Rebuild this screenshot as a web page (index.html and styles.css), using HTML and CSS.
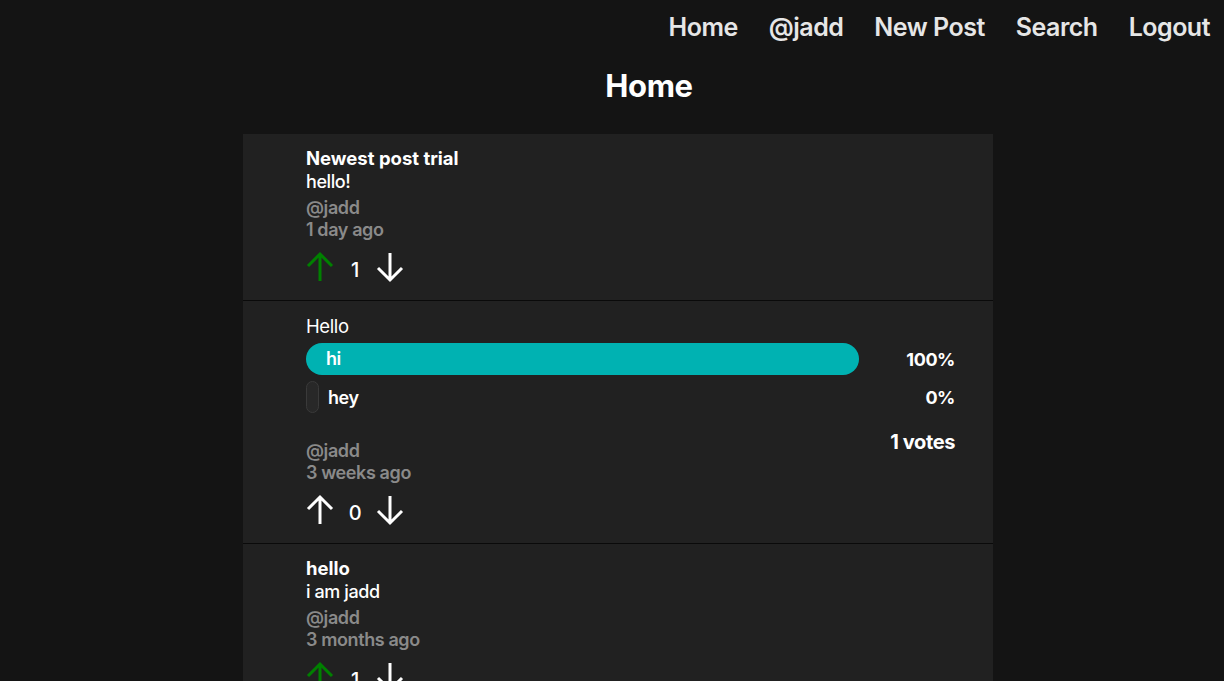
FILE: index.html
```html
<!DOCTYPE html>
<html lang="en">
<head>
<meta charset="utf-8">
<title>Home</title>
<link rel="stylesheet" href="styles.css">
</head>
<body>
<nav class="nav">
  <a class="nav-link" href="#">Home</a>
  <a class="nav-link" href="#">@jadd</a>
  <a class="nav-link" href="#">New Post</a>
  <a class="nav-link" href="#">Search</a>
  <a class="nav-link" href="#">Logout</a>
</nav>
<main class="main">
  <h1 class="page-title">Home</h1>
  <section class="feed">
    <article class="post">
      <div class="post-title">Newest post trial</div>
      <div class="post-body">hello!</div>
      <div class="meta">
        <div class="author">@jadd</div>
        <div class="time">1 day ago</div>
      </div>
      <div class="votes">
        <svg class="arrow up active" viewBox="0 0 28 32" width="28" height="32"><path d="M14 30V3M2 15L14 3L26 15" fill="none" stroke="currentColor" stroke-width="3"/></svg>
        <span class="count">1</span>
        <svg class="arrow down" viewBox="0 0 28 32" width="28" height="32"><path d="M14 2V29M2 17L14 29L26 17" fill="none" stroke="currentColor" stroke-width="3"/></svg>
      </div>
    </article>
    <article class="post">
      <div class="poll-question">Hello</div>
      <div class="poll-row">
        <div class="poll-track">
          <div class="poll-bar filled" style="width:100%">hi</div>
        </div>
        <div class="poll-pct">100%</div>
      </div>
      <div class="poll-row">
        <div class="poll-track">
          <div class="poll-bar empty"></div>
          <span class="poll-label">hey</span>
        </div>
        <div class="poll-pct">0%</div>
      </div>
      <div class="poll-footer">
        <div class="meta poll-meta">
          <div class="author">@jadd</div>
          <div class="time">3 weeks ago</div>
        </div>
        <div class="poll-total">1 votes</div>
      </div>
      <div class="votes">
        <svg class="arrow up" viewBox="0 0 28 32" width="28" height="32"><path d="M14 30V3M2 15L14 3L26 15" fill="none" stroke="currentColor" stroke-width="3"/></svg>
        <span class="count">0</span>
        <svg class="arrow down" viewBox="0 0 28 32" width="28" height="32"><path d="M14 2V29M2 17L14 29L26 17" fill="none" stroke="currentColor" stroke-width="3"/></svg>
      </div>
    </article>
    <article class="post">
      <div class="post-title">hello</div>
      <div class="post-body">i am jadd</div>
      <div class="meta">
        <div class="author">@jadd</div>
        <div class="time">3 months ago</div>
      </div>
      <div class="votes">
        <svg class="arrow up active" viewBox="0 0 28 32" width="28" height="32"><path d="M14 30V3M2 15L14 3L26 15" fill="none" stroke="currentColor" stroke-width="3"/></svg>
        <span class="count">1</span>
        <svg class="arrow down" viewBox="0 0 28 32" width="28" height="32"><path d="M14 2V29M2 17L14 29L26 17" fill="none" stroke="currentColor" stroke-width="3"/></svg>
      </div>
    </article>
  </section>
</main>
</body>
</html>
```
FILE: styles.css
```css
* { box-sizing: border-box; }
html, body { margin: 0; padding: 0; }
body {
  background: #141414;
  color: #ffffff;
  font-family: Inter, "Noto Sans", sans-serif;
  letter-spacing: -0.4px;
  overflow: hidden;
  height: 681px;
}
.nav {
  display: flex;
  justify-content: flex-end;
  gap: 31px;
  padding: 10px 14px 0 0;
  height: 54px;
}
.nav-link {
  color: #e6e6e6;
  text-decoration: none;
  font-size: 25px;
  font-weight: 600;
  line-height: 34px;
  letter-spacing: -0.5px;
}
.main { padding-left: 12px; }
.page-title {
  margin: 0;
  text-align: center;
  padding-left: 62px;
  font-size: 31px;
  font-weight: 700;
  line-height: 40px;
  height: 80px;
  padding-top: 12px;
}
.feed {
  width: 750px;
  margin: 0 auto;
}
.post {
  background: #212121;
  padding: 12px 38px 17px 63px;
  border-bottom: 1px solid #0a0a0a;
}
.post-title {
  font-size: 18.5px;
  font-weight: 700;
  line-height: 24px;
  letter-spacing: 0;
}
.post-body {
  font-size: 18px;
  font-weight: 500;
  line-height: 24px;
}
.meta {
  margin-top: 3px;
  color: #8a8a8a;
  font-size: 18px;
  font-weight: 600;
  line-height: 22px;
}
.votes {
  display: flex;
  align-items: center;
  margin-top: 10px;
  height: 32px;
}
.arrow { display: block; color: #ffffff; }
.arrow.active { color: #008000; }
.count {
  width: 42px;
  text-align: center;
  font-size: 20px;
  font-weight: 500;
  padding-top: 6px;
}
.poll-question {
  font-size: 18.5px;
  font-weight: 400;
  line-height: 24px;
  margin-top: 1px;
}
.poll-row {
  display: flex;
  align-items: center;
  margin-top: 5px;
}
.poll-row + .poll-row { margin-top: 6px; }
.poll-track {
  width: 553px;
  display: flex;
  align-items: center;
  height: 32px;
}
.poll-bar {
  height: 32px;
  border-radius: 16px;
  font-size: 18px;
  font-weight: 600;
  line-height: 32px;
}
.poll-bar.filled {
  background: #00b2b2;
  padding-left: 20px;
}
.poll-bar.empty {
  width: 13px;
  background: #282828;
  border: 1px solid #3a3a3a;
  border-radius: 7px;
}
.poll-label {
  margin-left: 9px;
  font-size: 18px;
  font-weight: 600;
}
.poll-pct {
  flex: 1;
  text-align: right;
  font-size: 18px;
  font-weight: 700;
}
.poll-footer {
  display: flex;
  justify-content: space-between;
  align-items: flex-start;
  margin-top: 17px;
}
.poll-meta { margin-top: 10px; }
.poll-total {
  font-size: 20px;
  font-weight: 700;
  line-height: 24px;
}
```
